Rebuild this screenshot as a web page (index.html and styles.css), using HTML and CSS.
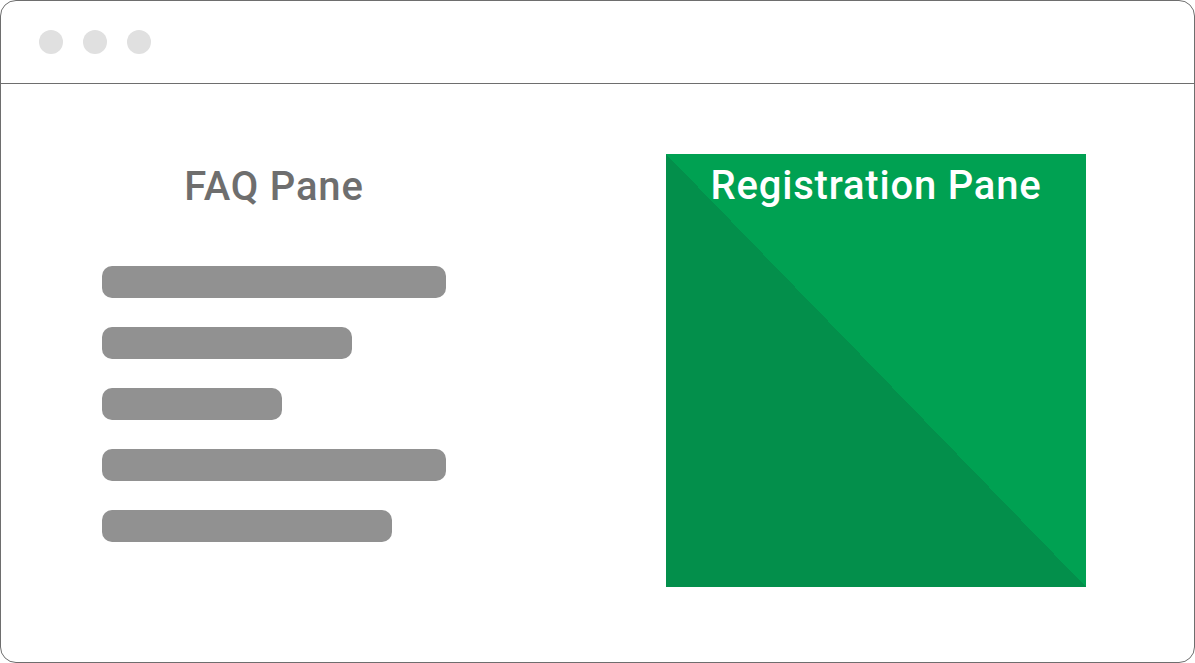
FILE: index.html
```html
<!DOCTYPE html>
<html>
<head>
<meta charset="utf-8">
<link rel="stylesheet" href="styles.css">
</head>
<body>
<div class="window">
  <div class="titlebar">
    <span class="dot"></span>
    <span class="dot"></span>
    <span class="dot"></span>
  </div>
  <div class="content">
    <div class="faq">
      <h2 class="faq-title">FAQ Pane</h2>
      <div class="bars">
        <div class="bar" style="width:344px"></div>
        <div class="bar" style="width:250px"></div>
        <div class="bar" style="width:180px"></div>
        <div class="bar" style="width:344px"></div>
        <div class="bar" style="width:290px"></div>
      </div>
    </div>
    <div class="register">
      <h2 class="register-title">Registration Pane</h2>
    </div>
  </div>
</div>
</body>
</html>
```
FILE: styles.css
```css
html, body {
  margin: 0;
  padding: 0;
  background: #ffffff;
}
body {
  font-family: Roboto, "Liberation Sans", sans-serif;
}
.window {
  width: 1195px;
  height: 663px;
  box-sizing: border-box;
  border: 1px solid #6e6e6e;
  border-radius: 16px;
  overflow: hidden;
}
.titlebar {
  height: 82px;
  border-bottom: 1px solid #6e6e6e;
  display: flex;
  align-items: center;
  gap: 20px;
  padding-left: 38px;
}
.dot {
  width: 24px;
  height: 24px;
  border-radius: 50%;
  background: #e0e0e0;
}
.content {
  display: flex;
  padding-top: 70px;
}
.faq {
  margin-left: 101px;
  width: 344px;
  display: flex;
  flex-direction: column;
}
.faq-title {
  margin: 0;
  text-align: center;
  font-size: 40px;
  font-weight: 500;
  letter-spacing: 0.8px;
  line-height: 48px;
  color: #6e6e6e;
  padding-top: 9px;
}
.bars {
  margin-top: 55px;
  display: flex;
  flex-direction: column;
  gap: 29px;
}
.bar {
  height: 32px;
  border-radius: 10px;
  background: #919191;
}
.register {
  margin-left: 220px;
  width: 420px;
  height: 433px;
  background: linear-gradient(to top right, #038f4b 50%, #00a152 50%);
}
.register-title {
  margin: 0;
  text-align: center;
  font-size: 40px;
  font-weight: 500;
  letter-spacing: 0.8px;
  line-height: 48px;
  color: #ffffff;
  padding-top: 8px;
}
```
